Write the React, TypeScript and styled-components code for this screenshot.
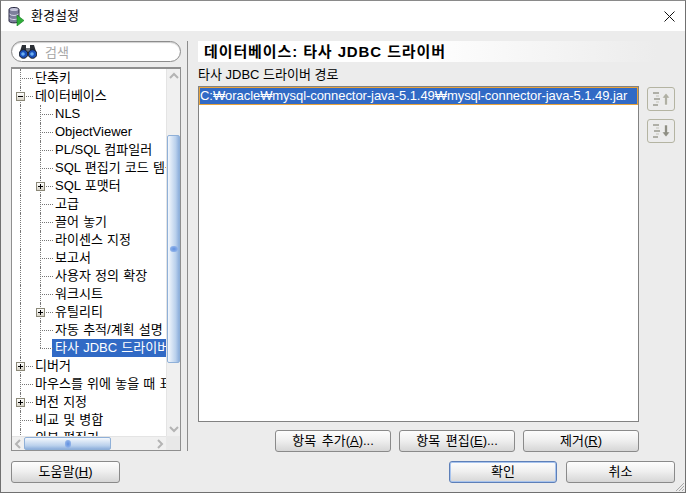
import React from "react";
import styled, { createGlobalStyle, css } from "styled-components";

const Global = createGlobalStyle`
  html, body { margin: 0; padding: 0; background: #ececec; }
  body { font-family: "Liberation Sans", "Noto Sans CJK KR", sans-serif; font-size: 13px; color: #000; }
  * { box-sizing: border-box; }
`;

const Win = styled.div`
  width: 686px; height: 493px; border: 1px solid #707070; border-top-color: #8a8a8a; background: #ececec;
  display: flex; flex-direction: column; position: relative; overflow: hidden;
`;
const TitleBar = styled.div`
  height: 30px; background: #fff; display: flex; align-items: center; padding: 0 10px 0 7px; gap: 6px; flex: none;
`;
const TitleText = styled.span`flex: 1; line-height: 30px;`;
const Body = styled.div`flex: 1; display: flex; flex-direction: column; padding: 10px 10px 9px 10px; min-height: 0;`;
const Main = styled.div`flex: 1; display: flex; min-height: 0;`;
const LeftPane = styled.div`width: 170px; flex: none; display: flex; flex-direction: column; gap: 5px; margin-bottom: 1px;`;
const Search = styled.div`
  height: 21px; flex: none; border: 1px solid #8c8c8c; border-radius: 11px; background: #fff;
  display: flex; align-items: center; padding-left: 7px; gap: 8px; color: #a8a8a8; box-shadow: inset 0 1px 1px #d0d0d0;
`;
const Tree = styled.div`
  flex: 1; min-height: 0; border: 1px solid #8f8f8f; border-top-width: 2px; background: #fff;
  display: grid; grid-template-columns: 1fr 14px; grid-template-rows: 1fr 14px;
`;
const TreeView = styled.div`overflow: hidden; min-width: 0; min-height: 0; word-spacing: .6px;`;
const Row = styled.div`height: 18px; display: flex; white-space: nowrap; line-height: 18px;`;
const Lead = styled.span`width: 8px; flex: none;`;
const Guide = styled.span`width: 20px; flex: none; border-left: 1px dotted #777;`;
const Elbow = styled.span<{ $last?: boolean }>`
  width: 15px; flex: none; position: relative;
  &::before { content: ""; position: absolute; left: 0; top: 0; height: ${p => (p.$last ? "9px" : "18px")}; border-left: 1px dotted #777; }
  &::after { content: ""; position: absolute; left: 0; top: 9px; width: 13px; border-top: 1px dotted #777; }
`;
const Expander = styled.span`
  position: absolute; z-index: 1; left: -4px; top: 5px; width: 9px; height: 9px; border: 1px solid #8b8878;
  background: linear-gradient(#fff, #d8d4c8);
  &::before { content: ""; position: absolute; left: 1px; top: 3px; width: 5px; height: 1px; background: #000; }
`;
const Plus = styled(Expander)`
  &::after { content: ""; position: absolute; left: 3px; top: 1px; width: 1px; height: 5px; background: #000; }
`;
const Label = styled.span<{ $sel?: boolean }>`
  padding: 0 2px 0 3px; margin-left: -3px; flex: ${p => (p.$sel ? "1" : "none")};
  ${p => p.$sel && css`background: #316ac5; color: #fff;`}
`;
const ScrollV = styled.div`
  background: #f0f0f0; display: flex; flex-direction: column; align-items: center; position: relative;
  border-left: 1px solid #e4e4e4;
`;
const ScrollH = styled.div`background: #f0f0f0; display: flex; align-items: center; position: relative; border-top: 1px solid #e4e4e4;`;
const Corner = styled.div`background: #e8e8e8;`;
const ArrowV = styled.div<{ $end?: boolean }>`
  height: 14px; flex: none; display: flex; align-items: center; justify-content: center;
  ${p => p.$end && css`margin-top: auto;`}
`;
const ArrowH = styled.div<{ $end?: boolean }>`
  width: 12px; flex: none; display: flex; align-items: center; justify-content: center;
  ${p => p.$end && css`margin-left: auto;`}
`;
const ThumbV = styled.div`
  position: absolute; left: 0; right: 0; top: 66px; height: 228px; border: 1px solid #8fb0d8; border-radius: 2px;
  background: linear-gradient(90deg, #f4f8fd, #b9d0ec 70%, #8fb0dc);
  display: flex; align-items: center; justify-content: center;
`;
const ThumbH = styled.div`
  position: absolute; left: 12px; top: 0; bottom: 0; width: 87px; border: 1px solid #8fb0d8; border-radius: 2px;
  background: linear-gradient(#f4f8fd, #b9d0ec 70%, #8fb0dc);
  display: flex; align-items: center; justify-content: center;
`;
const Grip = styled.span<{ $h?: boolean }>`
  width: ${p => (p.$h ? "6px" : "8px")}; height: ${p => (p.$h ? "8px" : "6px")}; border-radius: 3px;
  background: radial-gradient(#5f8fe0, #a8c4ee);
`;
const Splitter = styled.div`width: 1px; flex: none; background: #8c8c8c; margin: 0 10px 0 6px; height: 410px;`;
const RightPane = styled.div`flex: 1; min-width: 0; display: flex; flex-direction: column;`;
const Header = styled.div`
  height: 21px; flex: none; padding-left: 6px; font-weight: bold; font-size: 15px; letter-spacing: .9px; line-height: 21px; margin-right: -6px;
  background: linear-gradient(90deg, #fff, #fff 45%, #ececec 95%); white-space: nowrap;
`;
const PathLabel = styled.div`height: 20px; margin-top: 4px; line-height: 17px; flex: none;`;
const ListRow = styled.div`flex: 1; display: flex; min-height: 0; gap: 8px;`;
const ListBox = styled.div`
  width: 441px; height: 336px; flex: none; background: #fff; border: 1px solid #828282;
`;
const ListItem = styled.div`
  height: 18px; background: #316ac5; color: #fff; border: 1px solid #e8a33c; line-height: 15px; white-space: nowrap; letter-spacing: -.06px;
`;
const SideCol = styled.div`display: flex; flex-direction: column; gap: 8px; padding-top: 1px;`;
const SideBtn = styled.button`
  width: 28px; height: 24px; padding: 0; border: 1px solid #b4b4a2; border-radius: 3px; background: #ececec;
  display: flex; align-items: center; justify-content: center;
`;
const Btn = styled.button<{ $w: number; $def?: boolean }>`
  width: ${p => p.$w}px; height: 22px; padding: 0; font: inherit; color: #000; word-spacing: 2px; border-radius: 3px;
  border: 1px solid ${p => (p.$def ? "#5d7fb8" : "#8a8a8a")};
  background: linear-gradient(180deg, #fdfdfd 0, #f0f0f0 45%, #d6d6d6 100%);
  ${p => p.$def && css`box-shadow: inset 0 0 0 1px #a8c4ee;`}
  line-height: 18px;
`;
const ActionRow = styled.div`display: flex; gap: 8px; margin: 9px 0 0 77px; height: 22px; flex: none;`;
const Footer = styled.div`display: flex; align-items: center; height: 22px; margin-top: 9px; flex: none;`;
const FooterRight = styled.div`display: flex; gap: 9px; margin-left: auto;`;
const ResizeGrip = styled.svg`position: absolute; right: 0; bottom: 0;`;
const CloseIcon = styled.svg`flex: none;`;

type Item = { t: string; lv: 0 | 1; exp?: "plus" | "minus"; last?: boolean; sel?: boolean };
const items: Item[] = [
  { t: "단축키", lv: 0 },
  { t: "데이터베이스", lv: 0, exp: "minus" },
  { t: "NLS", lv: 1 },
  { t: "ObjectViewer", lv: 1 },
  { t: "PL/SQL 컴파일러", lv: 1 },
  { t: "SQL 편집기 코드 템플릿", lv: 1 },
  { t: "SQL 포맷터", lv: 1, exp: "plus" },
  { t: "고급", lv: 1 },
  { t: "끌어 놓기", lv: 1 },
  { t: "라이센스 지정", lv: 1 },
  { t: "보고서", lv: 1 },
  { t: "사용자 정의 확장", lv: 1 },
  { t: "워크시트", lv: 1 },
  { t: "유틸리티", lv: 1, exp: "plus" },
  { t: "자동 추적/계획 설명", lv: 1 },
  { t: "타사 JDBC 드라이버", lv: 1, last: true, sel: true },
  { t: "디버거", lv: 0, exp: "plus" },
  { t: "마우스를 위에 놓을 때 표시", lv: 0 },
  { t: "버전 지정", lv: 0, exp: "plus" },
  { t: "비교 및 병합", lv: 0 },
  { t: "외부 편집기", lv: 0 },
];

const Chevron = ({ dir }: { dir: "up" | "down" | "left" | "right" }) => {
  const d = {
    up: "M1 7 L5 3 L9 7",
    down: "M1 3 L5 7 L9 3",
    left: "M7 1 L3 5 L7 9",
    right: "M3 1 L7 5 L3 9",
  }[dir];
  return (
    <svg width="10" height="10" viewBox="0 0 10 10">
      <path d={d} fill="none" stroke="#b4b4b4" strokeWidth="2" />
    </svg>
  );
};

const DbIcon = () => (
  <svg width="17" height="20" viewBox="0 0 17 20">
    <path d="M1 3.5 C1 .8 11 .8 11 3.5 V15 C11 17.5 1 17.5 1 15 Z" fill="#7d7f9c" stroke="#2c2c44" />
    <ellipse cx="6" cy="3.5" rx="4" ry="1.6" fill="#c8c8dc" />
    <path d="M1.5 8 C3 10 9 10 10.5 8 M1.5 12 C3 14 9 14 10.5 12" fill="none" stroke="#d8d8e8" />
    <path d="M9 9 L16 14.5 L9 20 Z" fill="#2fae3a" stroke="#137a1f" strokeWidth=".6" />
  </svg>
);

const Binoculars = () => (
  <svg width="18" height="15" viewBox="0 0 18 15">
    <path d="M3 1 H7 V5 H11 V1 H15 L17.5 9 H0.5 Z" fill="#2c3036" />
    <rect x="7" y="4" width="4" height="4" fill="#70757c" />
    <circle cx="4.5" cy="10" r="4.3" fill="#1a4fb8" stroke="#1c1f26" />
    <circle cx="13.5" cy="10" r="4.3" fill="#1a4fb8" stroke="#1c1f26" />
    <circle cx="4" cy="10" r="1.8" fill="#6db0f2" />
    <circle cx="13" cy="10" r="1.8" fill="#6db0f2" />
  </svg>
);

const SortIcon = ({ up }: { up?: boolean }) => (
  <svg width="22" height="18" viewBox="0 0 22 18">
    <path d="M3 3 H9 M4 9 H10 M3 15 H8" stroke="#9a9a90" strokeWidth="1.4" fill="none" />
    <path d="M6 6 H9 M6 12 H9" stroke="#c4c4ba" strokeWidth="1" fill="none" />
    {up ? (
      <path d="M14.5 15 V8 H12 L16 3 L20 8 H17.5 V15 Z" fill="#b0b0a4" stroke="#fff" strokeWidth=".5" />
    ) : (
      <path d="M14.5 3 V10 H12 L16 15 L20 10 H17.5 V3 Z" fill="#8f8f84" stroke="#fff" strokeWidth=".5" />
    )}
  </svg>
);

export default function App() {
  return (
    <Win>
      <Global />
      <TitleBar>
        <DbIcon />
        <TitleText>환경설정</TitleText>
        <CloseIcon width="11" height="11" viewBox="0 0 11 11">
          <path d="M.5 .5 L10.5 10.5 M10.5 .5 L.5 10.5" stroke="#111" strokeWidth="1" />
        </CloseIcon>
      </TitleBar>
      <Body>
        <Main>
          <LeftPane>
            <Search>
              <Binoculars />
              <span>검색</span>
            </Search>
            <Tree>
              <TreeView>
                {items.map(it => (
                  <Row key={it.t}>
                    <Lead />
                    {it.lv === 1 && <Guide />}
                    <Elbow $last={it.last}>
                      {it.exp === "plus" && <Plus />}
                      {it.exp === "minus" && <Expander />}
                    </Elbow>
                    <Label $sel={it.sel}>{it.t}</Label>
                  </Row>
                ))}
              </TreeView>
              <ScrollV>
                <ArrowV><Chevron dir="up" /></ArrowV>
                <ThumbV><Grip /></ThumbV>
                <ArrowV $end><Chevron dir="down" /></ArrowV>
              </ScrollV>
              <ScrollH>
                <ArrowH><Chevron dir="left" /></ArrowH>
                <ThumbH><Grip $h /></ThumbH>
                <ArrowH $end><Chevron dir="right" /></ArrowH>
              </ScrollH>
              <Corner />
            </Tree>
          </LeftPane>
          <Splitter />
          <RightPane>
            <Header>데이터베이스: 타사 JDBC 드라이버</Header>
            <PathLabel>타사 JDBC 드라이버 경로</PathLabel>
            <ListRow>
              <ListBox>
                <ListItem>C:₩oracle₩mysql-connector-java-5.1.49₩mysql-connector-java-5.1.49.jar</ListItem>
              </ListBox>
              <SideCol>
                <SideBtn><SortIcon up /></SideBtn>
                <SideBtn><SortIcon /></SideBtn>
              </SideCol>
            </ListRow>
            <ActionRow>
              <Btn $w={116}>항목 추가(<u>A</u>)...</Btn>
              <Btn $w={116}>항목 편집(<u>E</u>)...</Btn>
              <Btn $w={116}>제거(<u>R</u>)</Btn>
            </ActionRow>
          </RightPane>
        </Main>
        <Footer>
          <Btn $w={109}>도움말(<u>H</u>)</Btn>
          <FooterRight>
            <Btn $w={108} $def>확인</Btn>
            <Btn $w={109}>취소</Btn>
          </FooterRight>
        </Footer>
      </Body>
      <ResizeGrip width="11" height="11" viewBox="0 0 11 11">
        <path d="M10 2 L2 10 M10 5 L5 10 M10 8 L8 10" stroke="#a8a8a8" fill="none" />
      </ResizeGrip>
    </Win>
  );
}
